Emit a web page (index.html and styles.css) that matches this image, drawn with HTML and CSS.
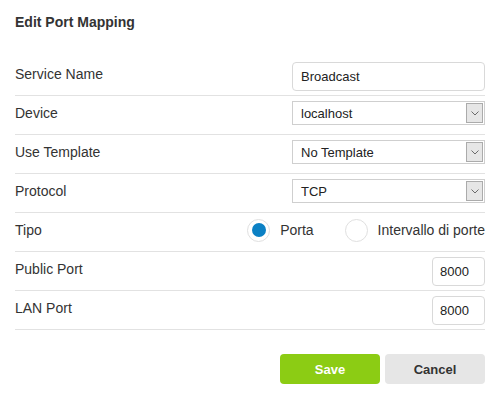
FILE: index.html
```html
<!DOCTYPE html>
<html>
<head>
<meta charset="utf-8">
<link rel="stylesheet" href="styles.css">
</head>
<body>
<div class="page">
  <h1 class="title">Edit Port Mapping</h1>
  <div class="row">
    <span class="label">Service Name</span>
    <input class="text-input" type="text" value="Broadcast">
  </div>
  <div class="row">
    <span class="label">Device</span>
    <div class="select"><span class="select-text">localhost</span><span class="arrow"><svg width="8" height="5" viewBox="0 0 8 5"><path d="M0.5 0.5 L4 4 L7.5 0.5" fill="none" stroke="#6b6b6b" stroke-width="1"/></svg></span></div>
  </div>
  <div class="row">
    <span class="label">Use Template</span>
    <div class="select"><span class="select-text">No Template</span><span class="arrow"><svg width="8" height="5" viewBox="0 0 8 5"><path d="M0.5 0.5 L4 4 L7.5 0.5" fill="none" stroke="#6b6b6b" stroke-width="1"/></svg></span></div>
  </div>
  <div class="row">
    <span class="label">Protocol</span>
    <div class="select"><span class="select-text">TCP</span><span class="arrow"><svg width="8" height="5" viewBox="0 0 8 5"><path d="M0.5 0.5 L4 4 L7.5 0.5" fill="none" stroke="#6b6b6b" stroke-width="1"/></svg></span></div>
  </div>
  <div class="row">
    <span class="label">Tipo</span>
    <div class="radios">
      <label class="radio"><span class="circle checked"></span><span class="radio-text">Porta</span></label>
      <label class="radio second"><span class="circle"></span><span class="radio-text">Intervallo di porte</span></label>
    </div>
  </div>
  <div class="row">
    <span class="label">Public Port</span>
    <input class="text-input port" type="text" value="8000">
  </div>
  <div class="row">
    <span class="label">LAN Port</span>
    <input class="text-input port" type="text" value="8000">
  </div>
  <div class="actions">
    <button class="btn save">Save</button>
    <button class="btn cancel">Cancel</button>
  </div>
</div>
</body>
</html>
```
FILE: styles.css
```css
* { box-sizing: border-box; }
body {
  margin: 0;
  font-family: "Liberation Sans", Arial, sans-serif;
  color: #333;
  background: #fff;
}
.page {
  padding: 14px 15px 0;
}
.title {
  margin: 0 0 27px;
  font-size: 14px;
  line-height: 16px;
  font-weight: bold;
  color: #333;
}
.row {
  display: flex;
  justify-content: space-between;
  align-items: flex-start;
  height: 39px;
  padding-top: 5px;
  border-bottom: 1px solid #e2e2e2;
}
.label {
  font-size: 14px;
  line-height: 24px;
  color: #333;
}
.text-input {
  width: 193px;
  height: 29px;
  border: 1px solid #d9d9d9;
  border-radius: 4px;
  padding: 0 8px;
  font-family: "Liberation Sans", Arial, sans-serif;
  font-size: 13px;
  color: #222;
  outline: none;
}
.text-input.port {
  width: 53px;
  padding: 0 7px;
}
.select {
  display: flex;
  width: 193px;
  height: 24px;
  border: 1px solid #cfcfcf;
  padding: 1px 1px 1px 0;
  background: #fff;
}
.select-text {
  flex: 1;
  padding-left: 8px;
  font-size: 13px;
  line-height: 21px;
  color: #222;
}
.arrow {
  width: 17px;
  height: 20px;
  border: 1px solid #ababab;
  background: #e6e6e6;
  display: flex;
  align-items: center;
  justify-content: center;
}
.radios {
  display: flex;
  align-items: center;
  height: 24px;
}
.radio {
  display: flex;
  align-items: center;
}
.radio.second {
  margin-left: 31px;
}
.circle {
  width: 23px;
  height: 23px;
  border: 1px solid #e0e0e0;
  border-radius: 50%;
  background: #fff;
  display: flex;
  align-items: center;
  justify-content: center;
  margin-right: 10px;
}
.circle.checked::after {
  content: "";
  width: 14px;
  height: 14px;
  border-radius: 50%;
  background: #0b80c4;
}
.radio-text {
  font-size: 14px;
  line-height: 24px;
  color: #333;
}
.actions {
  display: flex;
  justify-content: flex-end;
  gap: 5px;
  margin-top: 24px;
}
.btn {
  width: 100px;
  height: 30px;
  border: none;
  border-radius: 4px;
  font-family: "Liberation Sans", Arial, sans-serif;
  font-size: 13px;
  font-weight: bold;
}
.save {
  background: #8ccc14;
  color: #fff;
}
.cancel {
  background: #e6e6e6;
  color: #333;
}
```
